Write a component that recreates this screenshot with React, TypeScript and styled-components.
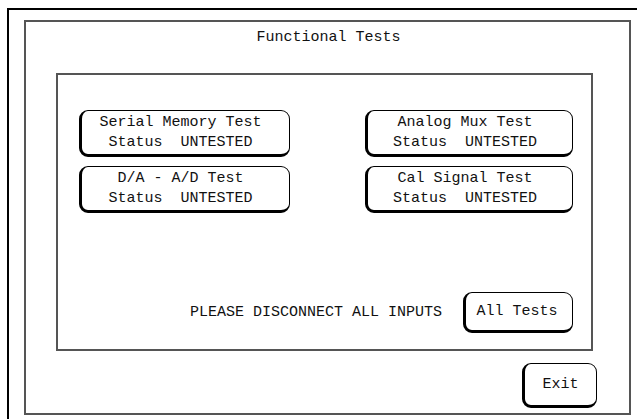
import styled, { createGlobalStyle } from "styled-components";

const GlobalStyle = createGlobalStyle`
  html, body {
    margin: 0;
    padding: 0;
    background: #fff;
    overflow: hidden;
  }
  body {
    font-family: "Liberation Mono", "DejaVu Sans Mono", monospace;
    font-size: 15px;
    color: #111;
  }
`;

const Screen = styled.div`
  margin: 8px 0 0 7px;
  width: 630px;
  height: 411px;
  border-left: 2px solid #000;
  border-top: 2px solid #000;
  padding: 10px 0 0 15px;
  box-sizing: border-box;
`;

const Frame = styled.div`
  width: 607px;
  height: 395px;
  box-sizing: border-box;
  border: 2px solid #555;
  display: flex;
  flex-direction: column;
`;

const Title = styled.div`
  padding-top: 6px;
  line-height: 20px;
  text-align: center;
  padding-left: 2px;
`;

const Panel = styled.div`
  margin: 25px 0 0 30px;
  width: 537px;
  height: 278px;
  box-sizing: border-box;
  border: 2px solid #555;
  padding: 35px 18px 16px 21px;
  display: flex;
  flex-direction: column;
`;

const TestGrid = styled.div`
  display: grid;
  grid-template-columns: 211px 208px;
  justify-content: space-between;
  row-gap: 9px;
`;

const Button = styled.button<{ $w?: number; $h: number; $shift?: number }>`
  width: ${(p) => (p.$w ? `${p.$w}px` : "100%")};
  height: ${(p) => p.$h}px;
  box-sizing: border-box;
  background: #fff;
  color: #111;
  font: inherit;
  line-height: 20px;
  border-style: solid;
  border-color: #000;
  border-width: 1px 1px 3px 3px;
  border-radius: 9px;
  padding: 0 ${(p) => p.$shift ?? 10}px 0 0;
  display: flex;
  flex-direction: column;
  align-items: center;
  justify-content: center;
  white-space: pre;
  cursor: pointer;
`;

const Footer = styled.div`
  margin-top: auto;
  display: flex;
  align-items: center;
  justify-content: flex-end;
  gap: 21px;
`;

const Notice = styled.span`
  line-height: 20px;
`;

const ExitRow = styled.div`
  display: flex;
  justify-content: flex-end;
  padding: 12px 32px 0 0;
`;

const tests = [
  "Serial Memory Test",
  "Analog Mux Test",
  "D/A - A/D Test",
  "Cal Signal Test",
];

export default function App() {
  return (
    <>
      <GlobalStyle />
      <Screen>
        <Frame>
          <Title>Functional Tests</Title>
          <Panel>
            <TestGrid>
              {tests.map((t) => (
                <Button key={t} $h={47}>
                  <span>{t}</span>
                  <span>{"Status  UNTESTED"}</span>
                </Button>
              ))}
            </TestGrid>
            <Footer>
              <Notice>PLEASE DISCONNECT ALL INPUTS</Notice>
              <Button $w={110} $h={41} $shift={4}>
                All Tests
              </Button>
            </Footer>
          </Panel>
          <ExitRow>
            <Button $w={75} $h={45} $shift={0}>
              Exit
            </Button>
          </ExitRow>
        </Frame>
      </Screen>
    </>
  );
}
